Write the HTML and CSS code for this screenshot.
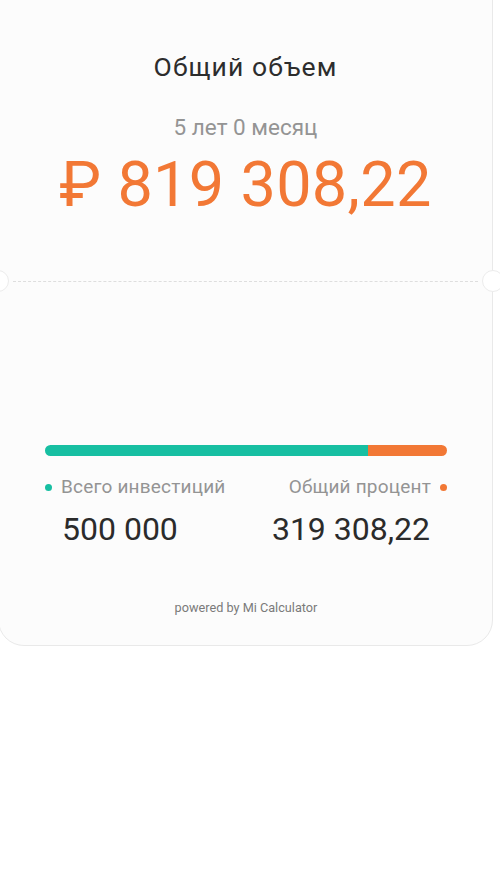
FILE: index.html
```html
<!DOCTYPE html>
<html>
<head>
  <meta charset="UTF-8">
  <title>Общий объем</title>
  <link rel="stylesheet" href="styles.css">
</head>
<body>
  <div class="card">
    <div class="card-top">
      <h2 class="title">Общий объем</h2>
      <p class="period">5 лет 0 месяц</p>
      <p class="total">₽ 819 308,22</p>
    </div>
    <div class="divider">
      <span class="notch notch-left"></span>
      <span class="dash"></span>
      <span class="notch notch-right"></span>
    </div>
    <div class="card-bottom">
      <div class="bar">
        <div class="bar-invest" style="width: 80.3%;"></div>
        <div class="bar-interest"></div>
      </div>
      <div class="legend">
        <div class="legend-item">
          <div class="legend-label"><span class="dot dot-teal"></span>Всего инвестиций</div>
          <div class="legend-value">500 000</div>
        </div>
        <div class="legend-item legend-right">
          <div class="legend-label">Общий процент<span class="dot dot-orange"></span></div>
          <div class="legend-value">319 308,22</div>
        </div>
      </div>
      <p class="powered">powered by Mi Calculator</p>
    </div>
  </div>
</body>
</html>
```

FILE: styles.css
```css
:root {
  --bg-color: #ffffff;
  --card-color: #fcfcfc;
  --border-color: #e9e9e9;
  --text-color: #333333;
  --muted-color: #949494;
  --orange: #f27835;
  --teal: #17bfa2;
}
* {
  box-sizing: border-box;
}
body {
  margin: 0;
  padding: 0;
  background-color: var(--bg-color);
  color: var(--text-color);
  font-family: Roboto, 'Noto Sans', sans-serif;
  overflow: hidden;
}
.card {
  width: 495px;
  margin: -30px 0 0 -2px;
  background-color: var(--card-color);
  border: 1px solid var(--border-color);
  border-radius: 0 0 26px 26px;
}
.card-top {
  padding-top: 81px;
  text-align: center;
  height: 310px;
}
.title {
  margin: 0;
  font-size: 26.5px;
  font-weight: 400;
  line-height: 30px;
  letter-spacing: 1.1px;
  color: #2d2d2d;
}
.period {
  margin: 32px 0 0;
  font-size: 22.5px;
  line-height: 26px;
  color: var(--muted-color);
}
.total {
  margin: 8px 0 0;
  font-size: 63px;
  line-height: 74px;
  color: var(--orange);
  letter-spacing: 0.3px;
}
.divider {
  position: relative;
  height: 1px;
  display: flex;
  align-items: center;
}
.dash {
  flex: 1;
  margin: 0 14px;
  border-top: 1px dashed #dedede;
}
.notch {
  position: absolute;
  top: -11px;
  width: 22px;
  height: 22px;
  border-radius: 50%;
  background-color: var(--bg-color);
  border: 1px solid #ececec;
}
.notch-left {
  left: -12px;
}
.notch-right {
  right: -12px;
}
.card-bottom {
  padding: 163px 45px 0 46px;
  height: 363px;
}
.bar {
  display: flex;
  height: 11px;
  border-radius: 6px;
  overflow: hidden;
}
.bar-invest {
  background-color: var(--teal);
}
.bar-interest {
  flex: 1;
  background-color: var(--orange);
}
.legend {
  display: flex;
  justify-content: space-between;
  margin-top: 20px;
}
.legend-label {
  display: flex;
  align-items: center;
  font-size: 19px;
  line-height: 22px;
  letter-spacing: 0.2px;
  color: var(--muted-color);
}
.legend-right {
  text-align: right;
}
.legend-right .legend-label {
  justify-content: flex-end;
}
.dot {
  width: 7px;
  height: 7px;
  border-radius: 50%;
  display: inline-block;
}
.dot-teal {
  background-color: var(--teal);
  margin-right: 9px;
}
.dot-orange {
  background-color: var(--orange);
  margin-left: 9px;
}
.legend-value {
  margin-top: 13px;
  font-size: 32px;
  line-height: 36px;
  color: #2b2b2b;
  padding: 0 17px 0 17px;
}
.powered {
  margin: 53px 0 0;
  text-align: center;
  font-size: 12.7px;
  line-height: 15px;
  color: #7a7a7a;
}
```
